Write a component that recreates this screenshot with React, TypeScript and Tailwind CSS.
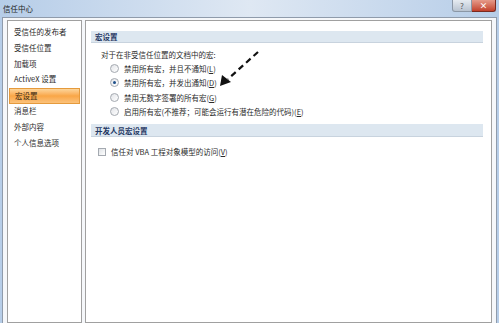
const navItems = [
  "受信任的发布者",
  "受信任位置",
  "加载项",
  "ActiveX 设置",
  "宏设置",
  "消息栏",
  "外部内容",
  "个人信息选项",
];

const macroOptions = [
  { label: "禁用所有宏，并且不通知", key: "L" },
  { label: "禁用所有宏，并发出通知", key: "D" },
  { label: "禁用无数字签署的所有宏", key: "G" },
  { label: "启用所有宏(不推荐；可能会运行有潜在危险的代码)", key: "E" },
];

function Radio({ checked }: { checked: boolean }) {
  return (
    <span className="w-[9px] h-[9px] rounded-full border border-[#a4a9b0] bg-gradient-to-br from-[#e2e4e8] to-[#ffffff] flex items-center justify-center shrink-0">
      {checked && <span className="w-[3px] h-[3px] rounded-full bg-[#1d4f8a]" />}
    </span>
  );
}

export default function App() {
  return (
    <div
      className="w-[499px] h-[323px] overflow-hidden flex flex-col bg-gradient-to-r from-[#b6cde8] via-[#dfe8f3] to-[#b6cde8] text-[7.5px] text-[#2b2b2b]"
      style={{ fontFamily: '"Noto Sans CJK SC", "Noto Sans", sans-serif' }}
    >
      {/* title bar */}
      <div className="h-[17px] flex items-start justify-between pl-[3px] pr-[3px]">
        <span className="mt-[4px] leading-[10px] text-[7.5px] text-[#1e1e1e]">信任中心</span>
        <div className="flex">
          <div className="w-[20px] h-[12px] rounded-bl-[3px] border border-t-0 border-[#8b97a6] bg-gradient-to-b from-[#e6ebf1] to-[#b9c4d1] flex items-center justify-center text-[8px] leading-none text-[#555]">
            ?
          </div>
          <div className="w-[24px] h-[12px] rounded-br-[3px] border border-t-0 border-l-0 border-[#7a2a20] bg-gradient-to-b from-[#e59a8a] to-[#c2402b] flex items-center justify-center text-[8px] leading-none text-white font-bold">
            ×
          </div>
        </div>
      </div>

      {/* body */}
      <div className="flex-1 mx-[2px] border-l border-r border-t border-[#8f9bab] bg-[#f5f7fa] flex gap-[3px] pt-[2px] pl-[4px] pr-[4px]">
        {/* nav */}
        <div className="w-[75px] bg-white border border-[#a0a0a0] pt-[4px] px-[1px] flex flex-col">
          {navItems.map((item) => (
            <div
              key={item}
              className={`h-[15.8px] leading-[14px] pl-[5px] whitespace-nowrap ${
                item === "宏设置"
                  ? "bg-gradient-to-b from-[#fcd59a] via-[#f9a646] to-[#fbc27a] border border-[#e59a3c] text-[#3b2a12]"
                  : "text-[#2a2a2a]"
              }`}
            >
              {item}
            </div>
          ))}
        </div>

        {/* content */}
        <div className="flex-1 bg-white border border-[#a0a0a0] pt-[10px] pl-[5px] pr-[8px] relative">
          <div className="h-[12px] bg-[#dde7f0] border-b border-[#c8d3de] pl-[4px] leading-[12px] font-bold text-[#1f3763]">
            宏设置
          </div>
          <div className="pl-[10px] pt-[6px] leading-[12px]">对于在非受信任位置的文档中的宏:</div>
          <div className="flex flex-col pl-[19px]">
            {macroOptions.map((opt, i) => (
              <div key={opt.key} className="h-[14.5px] flex items-center gap-[5px] whitespace-nowrap">
                <Radio checked={i === 1} />
                <span>
                  {opt.label}(<span className="underline">{opt.key}</span>)
                </span>
              </div>
            ))}
          </div>

          <div className="mt-[5px] h-[13px] bg-[#dde7f0] border-b border-[#c8d3de] pl-[4px] leading-[13px] font-bold text-[#1f3763]">
            开发人员宏设置
          </div>
          <div className="pl-[7px] pt-[9px] h-[21px] flex items-center gap-[5px] whitespace-nowrap">
            <span className="w-[8px] h-[8px] border border-[#a4a9b0] bg-gradient-to-br from-[#dfe2e6] to-white shrink-0" />
            <span>
              信任对 VBA 工程对象模型的访问(<span className="underline">V</span>)
            </span>
          </div>

          {/* annotation arrow */}
          <svg className="absolute left-[132px] top-[29px] w-[42px] h-[38px]" viewBox="0 0 42 38">
            <line x1="40" y1="2" x2="10" y2="29" stroke="#111" strokeWidth="2.2" strokeDasharray="6 4" />
            <polygon points="2,36 4,25 13,32" fill="#111" />
          </svg>
        </div>
      </div>
    </div>
  );
}
